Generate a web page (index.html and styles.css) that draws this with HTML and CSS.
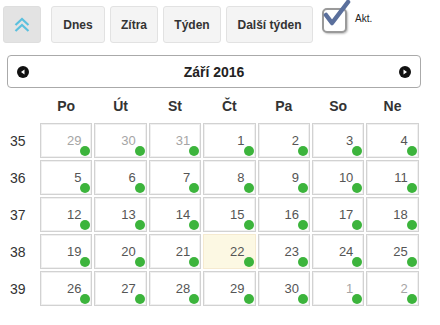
FILE: index.html
```html
<!DOCTYPE html>
<html>
<head>
<meta charset="utf-8">
<link rel="stylesheet" href="styles.css">
</head>
<body>
<div class="toolbar">
  <button class="btn toggle" type="button">
    <svg width="18" height="18" viewBox="0 0 18 18"><path d="M2.5 9 L9 3 L15.5 9" fill="none" stroke="#5bc0de" stroke-width="2.2"/><path d="M2.5 15 L9 9 L15.5 15" fill="none" stroke="#5bc0de" stroke-width="2.2"/></svg>
  </button>
  <div class="group">
    <button class="btn" type="button">Dnes</button>
    <button class="btn" type="button">Zítra</button>
    <button class="btn" type="button">Týden</button>
    <button class="btn" type="button">Další týden</button>
  </div>
  <label class="check">
    <span class="box">
      <svg class="tick" width="34" height="30" viewBox="0 0 34 30"><path d="M6 16 L12 24 L28 3" fill="none" stroke="#5a6f9c" stroke-width="4.5" stroke-linecap="round" stroke-linejoin="round"/></svg>
    </span>
    <span class="akt">Akt.</span>
  </label>
</div>

<div class="nav">
  <span class="arrow"><svg width="12" height="12" viewBox="0 0 12 12"><circle cx="6" cy="6" r="6" fill="#111"/><path d="M4 6 L7.5 3.5 L7.5 8.5 Z" fill="#fff"/></svg></span>
  <span class="title">Září 2016</span>
  <span class="arrow"><svg width="12" height="12" viewBox="0 0 12 12"><circle cx="6" cy="6" r="6" fill="#111"/><path d="M8 6 L4.5 3.5 L4.5 8.5 Z" fill="#fff"/></svg></span>
</div>

<div class="grid head">
  <span></span><span>Po</span><span>Út</span><span>St</span><span>Čt</span><span>Pa</span><span>So</span><span>Ne</span>
</div>

<div class="grid days">
  <span class="wk">35</span>
  <div class="cell other">29</div><div class="cell other">30</div><div class="cell other">31</div><div class="cell">1</div><div class="cell">2</div><div class="cell">3</div><div class="cell">4</div>
  <span class="wk">36</span>
  <div class="cell">5</div><div class="cell">6</div><div class="cell">7</div><div class="cell">8</div><div class="cell">9</div><div class="cell">10</div><div class="cell">11</div>
  <span class="wk">37</span>
  <div class="cell">12</div><div class="cell">13</div><div class="cell">14</div><div class="cell">15</div><div class="cell">16</div><div class="cell">17</div><div class="cell">18</div>
  <span class="wk">38</span>
  <div class="cell">19</div><div class="cell">20</div><div class="cell">21</div><div class="cell today">22</div><div class="cell">23</div><div class="cell">24</div><div class="cell">25</div>
  <span class="wk">39</span>
  <div class="cell">26</div><div class="cell">27</div><div class="cell">28</div><div class="cell">29</div><div class="cell">30</div><div class="cell other">1</div><div class="cell other">2</div>
</div>
</body>
</html>
```

FILE: styles.css
```css
* { box-sizing: border-box; }
body {
  margin: 0;
  background: #fff;
  font-family: "Liberation Sans", Arial, sans-serif;
  color: #333;
}
.toolbar {
  display: flex;
  align-items: flex-start;
  padding: 6px 0 0 3px;
  height: 55px;
}
.btn {
  height: 37px;
  padding: 0;
  border: 1px solid #e2e2e2;
  border-radius: 3px;
  background: #f4f4f4;
  font-family: "Liberation Sans", Arial, sans-serif;
  font-weight: bold;
  font-size: 12px;
  color: #333;
  white-space: nowrap;
}
.toggle {
  width: 38px;
  background: #e3e3e3;
  border-color: #dedede;
  display: flex;
  align-items: center;
  justify-content: center;
}
.group {
  display: flex;
  gap: 5px;
  margin-left: 10px;
}
.group .btn:nth-child(1) { width: 54px; }
.group .btn:nth-child(2) { width: 48px; }
.group .btn:nth-child(3) { width: 58px; }
.group .btn:nth-child(4) { width: 87px; }
.check {
  display: flex;
  align-items: center;
  margin-left: 9px;
  margin-top: 2px;
}
.box {
  position: relative;
  width: 25px;
  height: 25px;
  border: 2px solid #9a9a9a;
  border-radius: 5px;
  background: #fff;
  box-shadow: 1px 1px 2px rgba(0,0,0,0.25);
}
.tick {
  position: absolute;
  left: -4px;
  top: -11px;
}
.akt {
  font-size: 10px;
  margin-left: 8px;
  margin-top: -4px;
  color: #222;
}
.nav {
  display: flex;
  align-items: center;
  justify-content: space-between;
  margin-left: 7px;
  width: 414px;
  height: 33px;
  padding: 0 9px 0 9px;
  border: 1px solid #aaa;
  border-radius: 4px;
  background: #fff;
}
.arrow { display: flex; }
.title {
  font-weight: bold;
  font-size: 14px;
  color: #222;
}
.grid {
  display: grid;
  grid-template-columns: 38px repeat(7, 52.4px);
  column-gap: 2px;
}
.head {
  height: 35px;
  align-items: center;
  font-weight: bold;
  font-size: 14px;
  color: #333;
  text-align: center;
}
.days {
  row-gap: 2px;
  grid-auto-rows: 35px;
}
.wk {
  font-size: 14px;
  color: #333;
  align-self: center;
  padding-left: 10px;
}
.cell {
  position: relative;
  border: 1px solid #d2d2d2;
  box-shadow: inset 0 0 0 1px #f0f0f0;
  font-size: 13px;
  color: #555;
  text-align: right;
  padding: 9px 10px 0 0;
}
.cell.other { color: #a5a5a5; }
.cell.today {
  background: #fcf8e3;
  border-color: #f5ead0;
  box-shadow: none;
}
.cell::after {
  content: "";
  position: absolute;
  right: 1px;
  bottom: 1px;
  width: 10px;
  height: 10px;
  border-radius: 50%;
  background: #3cb43c;
}
```
